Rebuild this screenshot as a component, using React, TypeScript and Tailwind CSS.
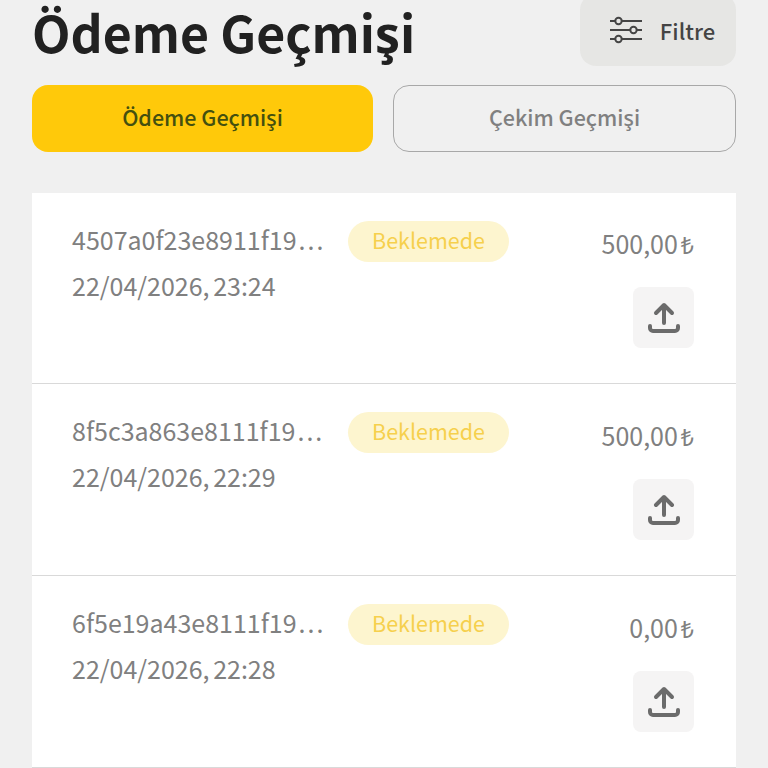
import React from "react";

function Row({ id, date, amount, h, right }: { id: string; date: string; amount: string; h: string; right: string }) {
  return (
    <div className={`flex justify-between border-b border-[#d9d9d9] pl-10 pr-[42px] pt-[28px] ${h}`}>
      <div className="flex flex-col">
        <div className="flex items-center">
          <span className="h-[41px] w-[252px] whitespace-nowrap text-[25px] leading-[37px] text-[#808080]">
            {id}
            <span className="ml-[2px] tracking-[2px]">...</span>
          </span>
          <span className="ml-6 flex h-[41px] w-[161px] items-center justify-center rounded-full bg-[#fdf5cf] pb-[3px] text-[21.5px] text-[#f6d04d]">Beklemede</span>
        </div>
        <span className="mt-[3px] text-[25px] leading-[41px] [word-spacing:-2px] text-[#808080]">{date}</span>
      </div>
      <div className={`flex flex-col items-end ${right}`}>
        <span className="whitespace-nowrap text-[25px] leading-[41px] text-[#808080]">
          {amount}
          <span className="ml-[3px] text-[23px]">₺</span>
        </span>
        <div className="mt-[22px] flex h-[61px] w-[61px] items-center justify-center rounded-lg bg-[#f5f4f4]">
          <svg width="34" height="34" viewBox="0 0 34 34" fill="none" stroke="#6b6b6b" strokeWidth="4" strokeLinecap="round" strokeLinejoin="round">
            <path d="M17 22V5M9 12l8-8 8 8" />
            <path d="M3 25v2a3 3 0 0 0 3 3h22a3 3 0 0 0 3-3v-2" />
          </svg>
        </div>
      </div>
    </div>
  );
}

export default function App() {
  return (
    <div className="h-[768px] w-[768px] overflow-hidden bg-[#f0f0f0] font-['Noto_Sans_CJK_JP','Noto_Sans',sans-serif]">
      <div className="flex h-[66px] items-start justify-between pl-8 pr-8">
        <h1 className="text-[50px] font-bold leading-[62px] text-[#212121]">Ödeme Geçmişi</h1>
        <div className="-mt-[6px] flex h-[72px] w-[156px] items-center justify-center gap-[17px] rounded-2xl bg-[#e6e6e4] pl-2">
          <svg width="34" height="28" viewBox="0 0 34 28" fill="none" stroke="#444" strokeWidth="2">
            <path d="M1 5h5M13 5h20M1 14h20M28 14h5M1 23h5M13 23h20" />
            <circle cx="9.5" cy="5" r="3.2" /><circle cx="24.5" cy="14" r="3.2" /><circle cx="9.5" cy="23" r="3.2" />
          </svg>
          <span className="text-[22px] font-medium text-[#444]">Filtre</span>
        </div>
      </div>
      <div className="mt-[19px] flex gap-5 px-8">
        <div className="flex h-[67px] flex-1 items-center justify-center rounded-2xl bg-[#ffc90a] pb-[2px] text-[21.5px] font-medium text-[#44500f]">Ödeme Geçmişi</div>
        <div className="flex h-[67px] flex-1 items-center justify-center rounded-2xl border border-[#a8a8a8] pb-[2px] text-[21.5px] font-medium text-[#808080]">Çekim Geçmişi</div>
      </div>
      <div className="mx-8 mt-[41px] bg-white">
        <Row id="4507a0f23e8911f19" date="22/04/2026, 23:24" amount="500,00" h="h-[191px]" right="pt-[2px]" />
        <Row id="8f5c3a863e8111f19" date="22/04/2026, 22:29" amount="500,00" h="h-[192px]" right="pt-[3px]" />
        <Row id="6f5e19a43e8111f19" date="22/04/2026, 22:28" amount="0,00" h="h-[192px]" right="pt-[3px]" />
      </div>
    </div>
  );
}
